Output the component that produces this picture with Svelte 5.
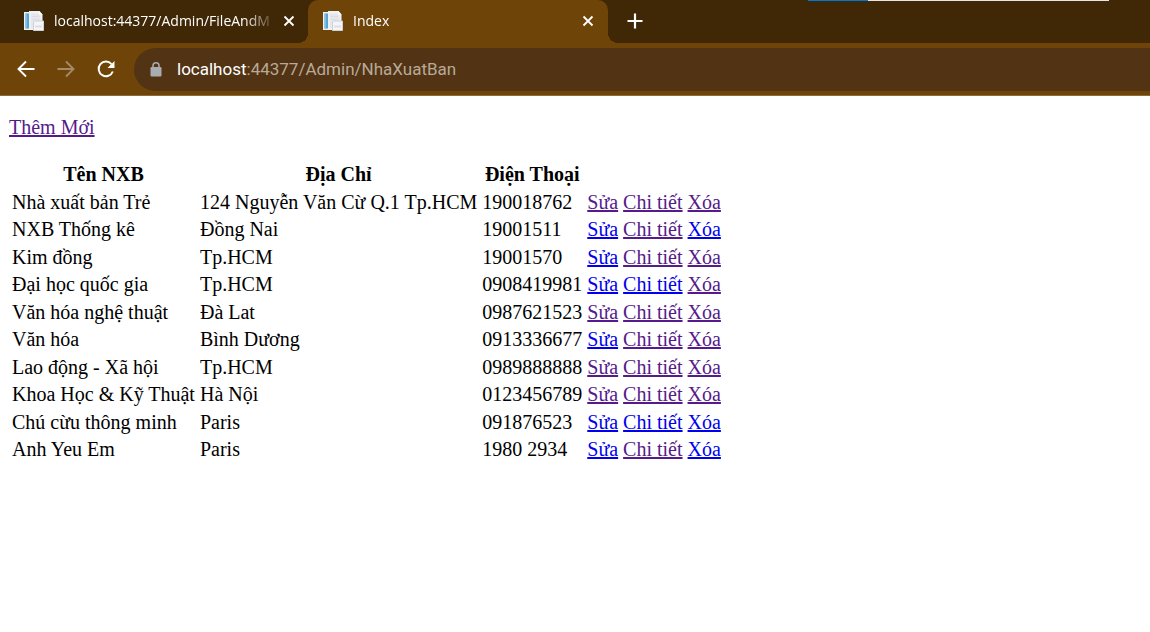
<script>
  const tabs = [
    { title: 'localhost:44377/Admin/FileAndM', active: false },
    { title: 'Index', active: true }
  ];

  // Each digit of `seen` marks a visited link: Sửa, Chi tiết, Xóa.
  const publishers = [
    { name: 'Nhà xuất bản Trẻ', address: '124 Nguyễn Văn Cừ Q.1 Tp.HCM', phone: '190018762', seen: '111' },
    { name: 'NXB Thống kê', address: 'Đồng Nai', phone: '19001511', seen: '010' },
    { name: 'Kim đồng', address: 'Tp.HCM', phone: '19001570', seen: '011' },
    { name: 'Đại học quốc gia', address: 'Tp.HCM', phone: '0908419981', seen: '001' },
    { name: 'Văn hóa nghệ thuật', address: 'Đà Lat', phone: '0987621523', seen: '111' },
    { name: 'Văn hóa', address: 'Bình Dương', phone: '0913336677', seen: '011' },
    { name: 'Lao động - Xã hội', address: 'Tp.HCM', phone: '0989888888', seen: '111' },
    { name: 'Khoa Học & Kỹ Thuật', address: 'Hà Nội', phone: '0123456789', seen: '111' },
    { name: 'Chú cừu thông minh', address: 'Paris', phone: '091876523', seen: '000' },
    { name: 'Anh Yeu Em', address: 'Paris', phone: '1980 2934', seen: '010' }
  ];
  const actions = ['Sửa', 'Chi tiết', 'Xóa'];
</script>

<header>
  <div class="strip">
    {#each tabs as tab}
      <div class="tab" class:active={tab.active}>
        <svg class="favicon" width="20" height="20" viewBox="0 0 20 20" aria-hidden="true">
          <path d="M0 1h7v18H0z" fill="#eef2f4" />
          <path d="M1.500 2.500h4v15h-4z" fill="#55a5d6" />
          <path d="M1.500 2.500h1.500v15H1.500z" fill="#82bfe2" />
          <path d="M5 0h10.500L18.500 3.500V19H5z" fill="#f0f1f4" />
          <path d="M7 2.500h9.500V17H7z" fill="#e6e7ec" />
          <path d="M15 0v3.500h3.500z" fill="#fff" />
          <path d="M8 5.500h7M8 8.500h7" stroke="#dcdee4" />
          <path d="M9.500 11l1-1h9v9.500h-10z" fill="#f4f5f8" stroke="#cfd1d8" />
          <path d="M11 15.500h7" stroke="#dcdee4" stroke-width="2" />
        </svg>
        <span class="title">{tab.title}</span>
        <button class="close" aria-label="Close tab">
          <svg width="12" height="12" viewBox="0 0 12 12"><path d="M1.500 1.500l9 9M10.500 1.500l-9 9" stroke="#fff" stroke-width="1.800" /></svg>
        </button>
      </div>
    {/each}
    <button class="new" aria-label="New tab">
      <svg width="16" height="16" viewBox="0 0 16 16"><path d="M8 .5v15M.5 8h15" stroke="#fff" stroke-width="2.200" /></svg>
    </button>
    <div class="progress"></div>
  </div>

  <div class="toolbar">
    <button aria-label="Back">
      <svg width="18" height="18" viewBox="0 0 18 18" fill="none" stroke="#fff" stroke-width="1.900"><path d="M17.500 9H2M9 1.500L1.500 9L9 16.500" /></svg>
    </button>
    <button aria-label="Forward" disabled>
      <svg width="18" height="18" viewBox="0 0 18 18" fill="none" stroke="#a58a67" stroke-width="1.900"><path d="M.5 9H16M9 1.500L16.500 9L9 16.500" /></svg>
    </button>
    <button aria-label="Reload">
      <svg width="18" height="18" viewBox="0 0 18 18"><path d="M15.800 11.500A7.300 7.300 0 1 1 14.500 4.100" fill="none" stroke="#fff" stroke-width="2" /><path d="M17.500 1v7h-7z" fill="#fff" /></svg>
    </button>
    <div class="omnibox">
      <svg width="12" height="15" viewBox="0 0 12 15" aria-hidden="true"><rect x=".5" y="5" width="11" height="9.500" rx="1.200" fill="#a9adb1" /><path d="M3 6V3.800a3 3 0 0 1 6 0V6" fill="none" stroke="#a9adb1" stroke-width="1.500" /></svg>
      <span class="url"><b>localhost</b>:44377/Admin/NhaXuatBan</span>
    </div>
  </div>
</header>

<main>
  <p><a class="seen" href="#create">Thêm Mới</a></p>
  <table>
    <thead>
      <tr><th>Tên NXB</th><th>Địa Chỉ</th><th>Điện Thoại</th><td></td></tr>
    </thead>
    <tbody>
      {#each publishers as p}
        <tr>
          <td>{p.name}</td>
          <td>{p.address}</td>
          <td>{p.phone}</td>
          <td>
            {#each actions as action, i}
              <a class:seen={p.seen[i] === '1'} href="#action">{action}</a>{' '}
            {/each}
          </td>
        </tr>
      {/each}
    </tbody>
  </table>
</main>

<style>
  :global(body) {
    margin: 0;
    background: #fff;
  }
  header {
    font-family: 'Open Sans', 'Noto Sans', sans-serif;
    color: #fff;
    background: #6e4409;
    border-bottom: 1px solid #8b6a3b;
  }
  button {
    display: flex;
    align-items: center;
    justify-content: center;
    padding: 0;
    border: 0;
    background: none;
  }
  .strip {
    position: relative;
    display: flex;
    height: 43px;
    padding-left: 8px;
    background: #402806;
  }
  .tab {
    position: relative;
    box-sizing: border-box;
    display: flex;
    align-items: center;
    flex: 0 1 300px;
    min-width: 0;
    padding: 0 10px 2px 16px;
  }
  .active {
    padding: 0 11px 2px 15px;
    background: #6e4409;
    border-radius: 10px 10px 0 0;
  }
  .active::before,
  .active::after {
    content: '';
    position: absolute;
    bottom: 0;
    width: 10px;
    height: 10px;
  }
  .active::before {
    right: 100%;
    background: radial-gradient(circle at 0 0, transparent 10px, #6e4409 10px);
  }
  .active::after {
    left: 100%;
    background: radial-gradient(circle at 100% 0, transparent 10px, #6e4409 10px);
  }
  .favicon {
    flex: none;
  }
  .title {
    flex: 1;
    min-width: 0;
    margin: 0 4px 0 10px;
    white-space: nowrap;
    font-size: 14px;
    line-height: 20px;
    mask-image: linear-gradient(to left, transparent, #000 32px);
  }
  .close {
    width: 18px;
    height: 18px;
  }
  .new {
    width: 54px;
    padding-bottom: 1px;
  }
  .progress {
    position: absolute;
    top: 0;
    left: 808px;
    width: 301px;
    height: 1px;
    background: linear-gradient(to right, #0078d7 20%, #e6e6e6 20%);
  }
  .toolbar {
    display: flex;
    align-items: center;
    height: 52px;
    padding-left: 6px;
  }
  .toolbar button {
    width: 40px;
    height: 40px;
  }
  .omnibox {
    display: flex;
    align-items: center;
    flex: 1;
    gap: 15px;
    height: 43px;
    margin-left: 8px;
    padding-left: 16px;
    border-radius: 22px 0 0 22px;
    background: #523414;
  }
  .url {
    color: #b9aa98;
    font-family: Roboto, sans-serif;
    font-size: 17px;
    line-height: 24px;
  }
  .url b {
    font-weight: 400;
    color: #fff;
  }
  main {
    padding: 20px 8px;
    font-family: 'Liberation Serif', 'Times New Roman', serif;
    font-size: 20px;
    line-height: 23px;
    color: #000;
  }
  p {
    margin: 0 1px 20px;
  }
  table {
    border-spacing: 3px 2px;
  }
  th,
  td {
    padding: 1px;
    white-space: nowrap;
  }
  tr {
    height: 26px;
  }
  tbody tr:nth-child(even) {
    height: 25px;
  }
  a {
    color: #00e;
  }
  .seen {
    color: #551a8b;
  }
</style>
